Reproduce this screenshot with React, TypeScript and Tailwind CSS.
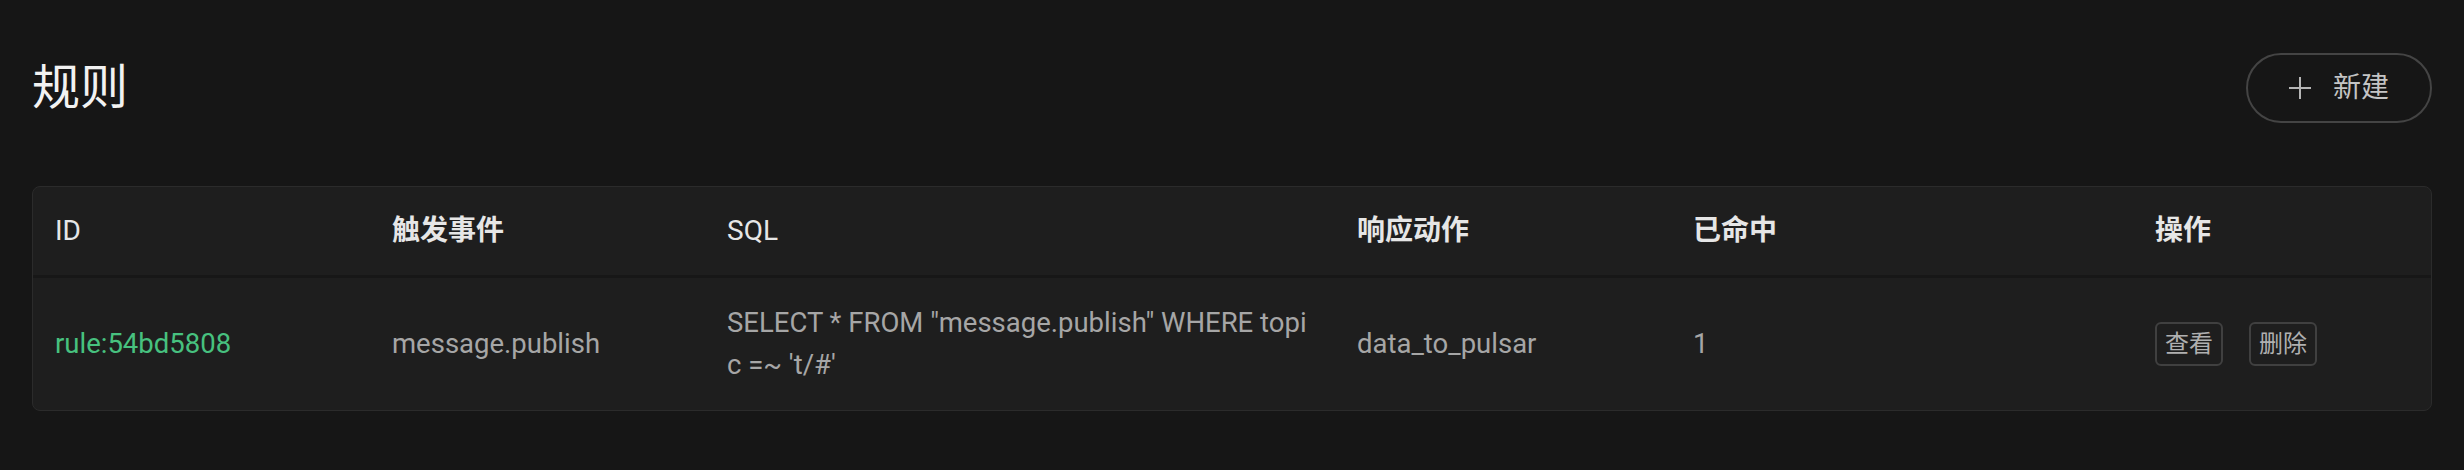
const headers = [
  { label: "ID", cjk: false },
  { label: "触发事件", cjk: true },
  { label: "SQL", cjk: false },
  { label: "响应动作", cjk: true },
  { label: "已命中", cjk: true },
  { label: "操作", cjk: true },
];

function PlusIcon() {
  return (
    <svg width="22" height="22" viewBox="0 0 22 22" fill="none" stroke="#b5b5b5" strokeWidth="2">
      <line x1="11" y1="0" x2="11" y2="22" />
      <line x1="0" y1="11" x2="22" y2="11" />
    </svg>
  );
}

export default function App() {
  return (
    <div
      className="min-h-[470px] w-full bg-[#161616] px-8 pt-[53px]"
      style={{ fontFamily: 'Roboto, "Noto Sans CJK SC", sans-serif' }}
    >
      <div className="flex items-center justify-between">
        <h1 className="text-[48px] leading-[70px] text-[#f2f2f2]">规则</h1>
        <button className="flex h-[70px] w-[186px] items-center justify-center gap-[22px] rounded-full border-2 border-[#444444] text-[28px] text-[#c4c4c4]">
          <PlusIcon />
          <span>新建</span>
        </button>
      </div>

      <div className="mt-[63px] overflow-hidden rounded-lg border border-[#2b2b2b] bg-[#1e1e1e]">
        <div className="grid grid-cols-[337px_335px_630px_336px_462px_1fr] border-b-[3px] border-[#171717] text-[28px] leading-[42px] text-[#e6e6e6]">
          {headers.map((h) => (
            <div key={h.label} className={`px-[22px] py-[23px] ${h.cjk ? "font-bold" : "font-normal"}`}>
              {h.label}
            </div>
          ))}
        </div>

        <div className="grid grid-cols-[337px_335px_630px_336px_462px_1fr] items-center text-[27.5px] leading-[42px] text-[#a6a6a6]">
          <div className="px-[22px] py-6 text-[#47c17f]">rule:54bd5808</div>
          <div className="px-[22px] py-6">message.publish</div>
          <div className="break-all px-[22px] py-6">
            SELECT * FROM "message.publish" WHERE topic =~ 't/#'
          </div>
          <div className="px-[22px] py-6">data_to_pulsar</div>
          <div className="px-[22px] py-6">1</div>
          <div className="flex items-center gap-[26px] px-[22px] py-6">
            <button className="rounded-md border-2 border-[#404040] px-[8px] text-[24px] leading-[40px] text-[#b0b0b0]">
              查看
            </button>
            <button className="rounded-md border-2 border-[#404040] px-[8px] text-[24px] leading-[40px] text-[#b0b0b0]">
              删除
            </button>
          </div>
        </div>
      </div>
    </div>
  );
}
